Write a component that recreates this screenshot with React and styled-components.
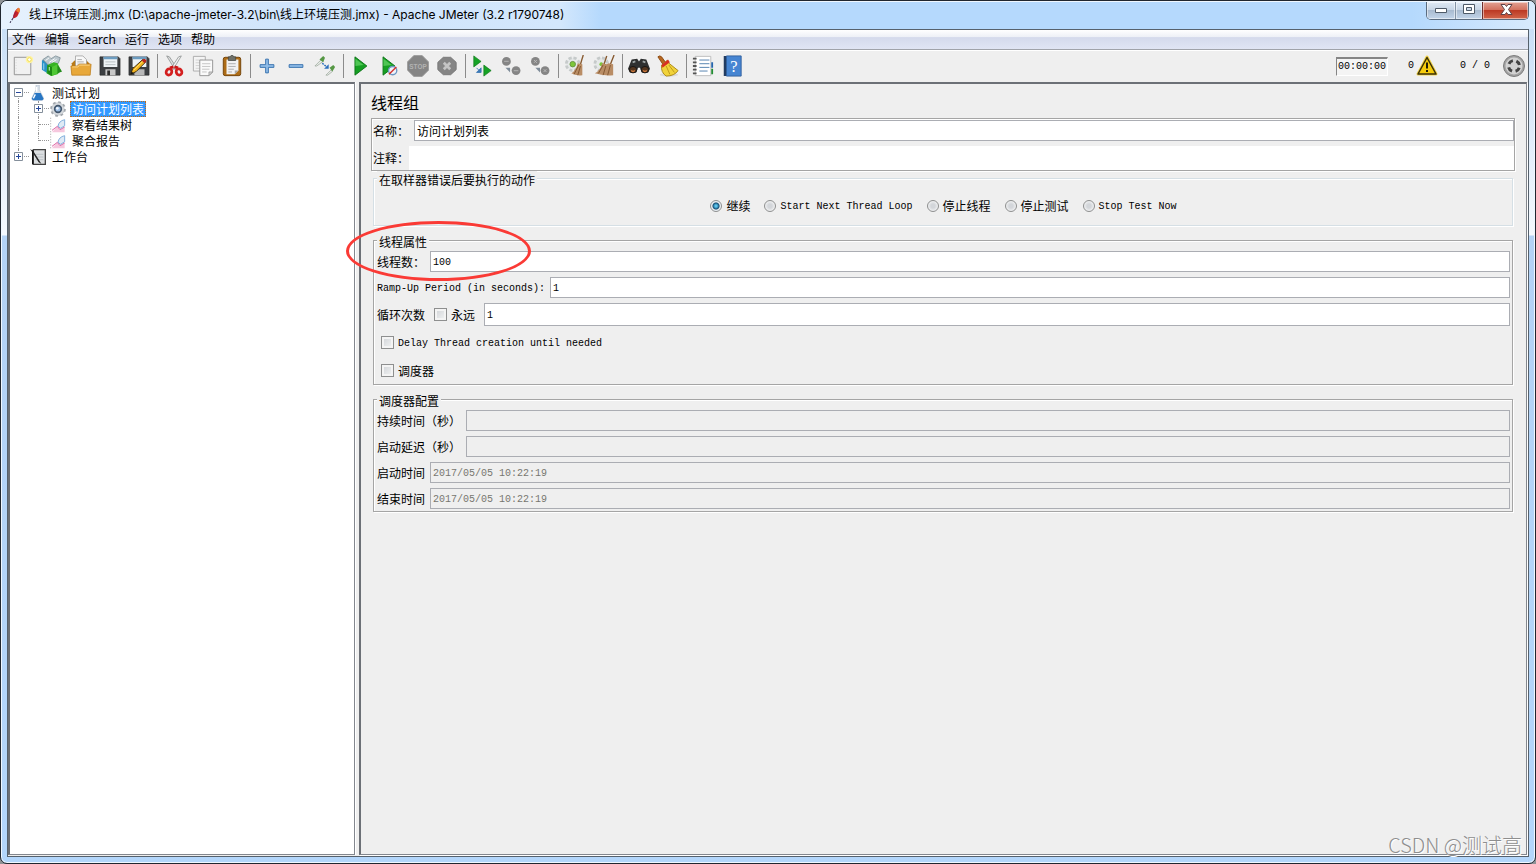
import { useState } from 'react';
import styled, { createGlobalStyle } from 'styled-components';

const arvore = [
    { nome: "测试计划", nivel: 0, icone: "frasco", expansor: "-" },
    { nome: "访问计划列表", nivel: 1, icone: "engrenagem", expansor: "+" },
    { nome: "察看结果树", nivel: 1, icone: "grafico" },
    { nome: "聚合报告", nivel: 1, icone: "grafico", ultimo: true },
    { nome: "工作台", nivel: 0, icone: "caderno", expansor: "+", ultimo: true },
];

const menus = ["文件", "编辑", "Search", "运行", "选项", "帮助"];

const ferramentas = [
    ["novo", "modelos", "abrir", "salvar", "salvarComo"],
    ["cortar", "copiar", "colar"],
    ["mais", "menos", "alternar"],
    ["iniciar", "iniciarSemPausa", "parar", "desligar"],
    ["remotoIniciar", "remotoParar", "remotoDesligar"],
    ["limpar", "limparTudo"],
    ["buscar", "vassoura"],
    ["lista", "ajuda"],
];

const acoes = [
    { texto: "继续" },
    { texto: "Start Next Thread Loop", latino: true },
    { texto: "停止线程" },
    { texto: "停止测试" },
    { texto: "Stop Test Now", latino: true },
];

const desenhos = {
    novo: <>
        <path d="M2.500 2.500h18v19h-18z" fill="#f1f1f1" stroke="#8e8e8e" />
        <path d="M4.500 5v15.500" stroke="#d5d5d5" strokeDasharray="1 2" />
        <circle cx="19" cy="5" r="4" fill="#fff3a0" />
        <circle cx="19" cy="5" r="2" fill="#fff" stroke="#ecd84a" />
    </>,
    modelos: <>
        <path d="M1 6l6-3 4 3v13l-4 1-6-4z" fill="#2a92c8" />
        <path d="M2 5l6-4 3 3 5-3 5 2-2 6-10 3z" fill="#b9c6cc" stroke="#75868e" strokeWidth=".8" />
        <path d="M5 6l4-3M9 8l6-4M12 8l5-3" stroke="#fff" />
        <path d="M3 9v7" stroke="#a8dcf3" />
        <path d="M7 11l7-3 4 1 4 8-4 4-7 2-5-3z" fill="#36b324" />
        <path d="M7 11l5 2v10l-5-3z" fill="#1c8a15" />
        <path d="M12 13l6-3v10l-6 3z" fill="#4fc734" />
        <path d="M9 13v4" stroke="#d9ffd1" />
        <path d="M18 11l5 7-5 2z" fill="#248c1c" />
    </>,
    abrir: <>
        <path d="M2 9l3-3h13l3 3v12h-19z" fill="#b97a17" />
        <path d="M6 1h8l4 4v8h-12z" fill="#f8f8f8" stroke="#999" strokeWidth=".8" />
        <path d="M8 5h5M8 7.500h7M8 10h8" stroke="#aaa" />
        <path d="M1 12h7l2-2h13l-1 12h-20z" fill="#e8a83a" stroke="#bc7c18" strokeWidth=".8" />
        <path d="M2.500 13h6l2-2h11" stroke="#ffd98c" />
    </>,
    salvar: <>
        <path d="M1 2h20l2 2v18h-22z" fill="#3c3f42" stroke="#222" strokeWidth=".6" />
        <path d="M5 2h15v11h-15z" fill="#eef3f6" />
        <path d="M5 2h15v2.500h-15z" fill="#6c9cc0" />
        <path d="M7 7.500h11M7 10.500h11" stroke="#b5bcc0" />
        <path d="M7 15.500h11v6.500h-11z" fill="#c7c7c7" />
        <path d="M9 17h3v5h-3z" fill="#2c2c2c" />
    </>,
    salvarComo: <>
        <path d="M1 2h20l2 2v18h-22z" fill="#3c3f42" stroke="#222" strokeWidth=".6" />
        <path d="M5 2h15v11h-15z" fill="#eef3f6" />
        <path d="M5 2h15v2.500h-15z" fill="#6c9cc0" />
        <path d="M7 15.500h11v6.500h-11z" fill="#b8b8b8" />
        <path d="M3 21l2-6 11-10 3 3-10 10z" fill="#f4b51e" stroke="#34260c" />
        <path d="M6.500 16.500l10-10" stroke="#ffe173" />
        <path d="M15 6l2-2q3 0 3 3l-2 2z" fill="#b8261d" />
        <path d="M3 21l1-3 2 2z" fill="#111" />
    </>,
    cortar: <>
        <path d="M4 1l3 1 8 12-2 2z" fill="#dcdede" stroke="#858989" strokeWidth=".8" />
        <path d="M20 1l-3 1-8 12 2 2z" fill="#f1f1f1" stroke="#858989" strokeWidth=".8" />
        <path d="M11.500 13l-4 1M12.500 13l4 1" stroke="#cc1717" strokeWidth="3" />
        <ellipse cx="6.500" cy="18.500" rx="3" ry="3.500" stroke="#d31f1f" strokeWidth="3" transform="rotate(25 6.500 18.500)" />
        <ellipse cx="17.500" cy="18.500" rx="3" ry="3.500" stroke="#d31f1f" strokeWidth="3" transform="rotate(-25 17.500 18.500)" />
    </>,
    copiar: <>
        <path d="M1.500 1.500h13v16h-13z" fill="#f4f4f4" stroke="#aaa" />
        <path d="M4 5.500h8M4 8.500h8M4 11.500h4M4 14.500h4" stroke="#d0d0d0" />
        <path d="M8.500 5.500h14v13l-4 4h-10z" fill="#fafafa" stroke="#929292" />
        <path d="M11 9.500h9M11 12.500h9M11 15.500h8M11 18.500h5" stroke="#c2c2c2" />
        <path d="M18.500 22.500v-4h4z" fill="#d8d8d8" stroke="#929292" strokeWidth=".8" />
    </>,
    colar: <>
        <rect x="2.500" y="2.500" width="19" height="20" rx="2" fill="#ad6c16" stroke="#704005" />
        <path d="M6 5h13v12l-4 4h-9z" fill="#f2f2f2" />
        <path d="M8 9.500h8M8 12.500h8M8 15.500h6M8 18.500h4" stroke="#aaa" />
        <path d="M19 17l-4 4v-4z" fill="#aaa" />
        <path d="M8 2h2l1-1.500h2l1 1.500h2v4h-8z" fill="#6e7069" stroke="#41433e" strokeWidth=".8" />
    </>,
    mais: <path d="M10.500 4.500h3v6h6v3h-6v6h-3v-6h-6v-3h6z" fill="#8fbce8" stroke="#336fac" />,
    menos: <path d="M4.500 10.500h15v3h-15z" fill="#8fbce8" stroke="#336fac" />,
    alternar: <>
        <path d="M1 12l7-7 2 2-7 5z" fill="#e8ece8" stroke="#9aa69a" strokeWidth=".8" />
        <path d="M6 5l4-4 2 2-2 5z" fill="#559744" />
        <path d="M13 22l6-6 1 2-5 4z" fill="#e8ece8" stroke="#9aa69a" strokeWidth=".8" />
        <path d="M17 14l4-3 2 2-3 5z" fill="#559744" />
        <path d="M9 9l5 4" stroke="#2c6fbd" strokeWidth="1.500" strokeDasharray="2 1" />
        <path d="M16 10v5h-5z" fill="#2c6fbd" />
    </>,
    iniciar: <>
        <path d="M6.500 2l13 10-13 10z" fill="#159f22" stroke="#0d7318" />
        <path d="M7 4l9 7-9 1z" fill="#4fc554" />
    </>,
    iniciarSemPausa: <>
        <path d="M5.500 2l13 10-13 10z" fill="#159f22" stroke="#0d7318" />
        <path d="M6 4l9 7-9 1z" fill="#4fc554" />
        <circle cx="16" cy="17" r="4.500" fill="#eef3fa" stroke="#6d96c2" strokeWidth="1.500" />
        <path d="M12 21l8-8" stroke="#d3312b" strokeWidth="1.500" />
    </>,
    parar: <>
        <path d="M7.500 .5h9l7 7v9l-7 7h-9l-7-7v-9z" fill="#858585" stroke="#9c9c9c" />
        <text x="12" y="15" textAnchor="middle" fontFamily="Liberation Sans" fontWeight="bold" fontSize="7" fill="#b3b3b3">STOP</text>
    </>,
    desligar: <>
        <path d="M8 2.500h8l6 5.500v8l-6 5.500h-8l-6-5.500v-8z" fill="#858585" stroke="#777" />
        <path d="M8.500 8.500l7 7M15.500 8.500l-7 7" stroke="#c4c4c4" strokeWidth="3" />
    </>,
    remotoIniciar: <>
        <path d="M3 1l8 6-8 6z" fill="#16a325" stroke="#0d7318" strokeWidth=".7" />
        <path d="M14 11l8 6-8 6z" fill="#16a325" stroke="#0d7318" strokeWidth=".7" />
        <path d="M6 14l3 3M11 14v5h-5z" stroke="#3e7ab6" fill="#3e7ab6" />
    </>,
    remotoParar: <>
        <circle cx="7" cy="7" r="4.800" fill="#858585" />
        <circle cx="17.500" cy="17" r="4.800" fill="#858585" />
        <path d="M4.500 7h5M15 17h5" stroke="#aaa" strokeWidth="1.500" />
        <path d="M6 14h5v5z" fill="#7f8c99" />
    </>,
    remotoDesligar: <>
        <circle cx="7" cy="7" r="4.800" fill="#858585" />
        <circle cx="17.500" cy="17" r="4.800" fill="#858585" />
        <path d="M5.500 5.500l3 3M8.500 5.500l-3 3M16 15.500l3 3M19 15.500l-3 3" stroke="#bbb" />
        <path d="M7 14h5v5z" fill="#7f8c99" />
    </>,
    limpar: <>
        <circle cx="9.500" cy="10" r="7" fill="#e6e9e9" stroke="#c6caca" strokeWidth="3" strokeDasharray="3.500 2" />
        <circle cx="9.500" cy="10" r="3" fill="#7cc639" stroke="#679342" />
        <path d="M21 0l-3 10" stroke="#875a30" strokeWidth="1.500" />
        <path d="M15 9l5 1v12q-7 1-12-2 5-3 7-11z" fill="#b98d65" />
        <path d="M16 11l-5 10M18 12l-3 10" stroke="#80552f" />
    </>,
    limparTudo: <>
        <circle cx="9" cy="10" r="7" fill="#e6e9e9" stroke="#c6caca" strokeWidth="3" strokeDasharray="3.500 2" />
        <circle cx="9" cy="10" r="2" fill="#7cc639" />
        <path d="M15 1l-3 9M23 0l-4 10" stroke="#875a30" strokeWidth="1.500" />
        <path d="M10 9l5 1 2-1 5 1v12q-11 1-20-2 6-3 8-11z" fill="#b98d65" />
        <path d="M11 11l-5 9M14 12l-3 10M19 11l-3 11" stroke="#80552f" />
    </>,
    buscar: <>
        <path d="M4 5l6-1 2 3 2-3 6 1 4 10-2 4h-7l-2-5h-2l-2 5h-7l-2-4z" fill="#2e3030" />
        <path d="M5 8l3-1M16 7l3 1" stroke="#9da5a5" strokeWidth="2" />
        <ellipse cx="5.500" cy="16" rx="4" ry="3.500" fill="#54361f" stroke="#141414" />
        <ellipse cx="18.500" cy="16" rx="4" ry="3.500" fill="#54361f" stroke="#141414" />
        <path d="M3.500 17q2 2 4 0M16.500 17q2 2 4 0" stroke="#cf793d" strokeWidth="1.500" />
    </>,
    vassoura: <>
        <ellipse cx="13" cy="21.500" rx="10" ry="2" fill="#dadada" />
        <path d="M1 2q2-2 4 0l5 7-3 2z" fill="#b86822" stroke="#89460c" />
        <path d="M5 11l6-5q2 0 2 3l10 8q-4 6-13 6-6-4-5-12z" fill="#f1d33a" stroke="#a98614" />
        <path d="M10 12l4 9M13 11l6 8" stroke="#ba9519" />
        <path d="M5 11l7-6 2 3-8 6z" fill="#d83122" />
    </>,
    lista: <>
        <path d="M3.500 1.500h17v21h-17z" fill="#fff" stroke="#bbb" />
        <path d="M1 4h4M1 8h4M1 12h4M1 16h4M1 20h4" stroke="#555" strokeWidth="2" />
        <path d="M8 5.500h11M8 9.500h11M8 13.500h11M8 17.500h9" stroke="#4c7cab" />
        <path d="M21 8h2v6h-2z" fill="#2464ad" />
        <path d="M21 15h2v6h-2z" fill="#228c32" />
    </>,
    ajuda: <>
        <path d="M3 1h4v22h-4z" fill="#223c61" />
        <path d="M6 1h16v22h-16z" fill="#4685d2" stroke="#2f5f9c" />
        <text x="14" y="18" textAnchor="middle" fontFamily="Liberation Serif" fontSize="18" fill="#fff">?</text>
    </>,
    alerta: <>
        <path d="M12 3l9 17h-18z" fill="#f5cb0b" stroke="#f0d24a" strokeWidth="3" strokeLinejoin="round" />
        <path d="M12 3.500l9 16.500h-18z" fill="#f5cb0b" stroke="#3b3108" strokeWidth="1.500" strokeLinejoin="round" />
        <path d="M12 8.500v6M12 16v2" stroke="#1e1a05" strokeWidth="2" />
    </>,
    indicador: <>
        <circle cx="12" cy="12" r="10.500" fill="#a3a3a3" stroke="#7c7c7c" />
        <circle cx="12" cy="12" r="8.500" fill="#d2d2d2" />
        <circle cx="12" cy="12" r="5.500" stroke="#444" strokeWidth="3" strokeDasharray="5 3.640" strokeDashoffset="-1.800" />
    </>,
    frasco: <>
        <path d="M9 0h5v7l6 12q1 4-2 4h-13q-3 0-2-4l6-12z" fill="#d8e1ea" stroke="#b5c0cc" />
        <path d="M7 12h9l4 8q0 3-2 3h-13q-2 0-2-3z" fill="#2876c4" />
        <path d="M8 14l-3 6M10 3v7" stroke="#fff" strokeWidth="2" />
    </>,
    engrenagem: <>
        <circle cx="12" cy="12" r="10" fill="#c9cdd1" stroke="#a4a9ae" strokeWidth="3.500" strokeDasharray="4 3.850" />
        <circle cx="12" cy="12" r="9" fill="#d5d9dd" />
        <circle cx="12" cy="12" r="5" fill="#9bbde3" stroke="#44576d" strokeWidth="2.500" />
        <circle cx="11" cy="11" r="2" fill="#eef5ff" />
    </>,
    grafico: <>
        <path d="M1 1v22" stroke="#999" strokeDasharray="2 2" />
        <path d="M3 23l8-9 4 5 7-4v8z" fill="#f6c8de" />
        <path d="M3 20l8-6 4 5 7-4" stroke="#df6ba8" strokeWidth="1.500" />
        <path d="M12 14q1-8 10-10v9l-6 4z" stroke="#84b1dd" strokeWidth="1.500" fill="#dfeaf5" />
    </>,
    caderno: <>
        <path d="M5 1h18v22h-18z" fill="#dcdfe1" stroke="#444" strokeWidth="2" />
        <path d="M8 8h12M8 12h12M8 16h12" stroke="#aeb4ba" />
        <path d="M0 0l5 3 12 19-4-2-10-16z" fill="#252525" />
        <path d="M4 2v21" stroke="#111" strokeWidth="2" />
    </>,
    pena: <>
        <path d="M8 15q0-9 7-14 4 2 0 9-2 5-7 5z" fill="#c92328" />
        <path d="M15 1q4 1 1 7l-4-3z" fill="#ec8132" />
        <path d="M8 15q1-4 4-8" stroke="#762059" />
        <path d="M8 15l-4 6" stroke="#39304f" strokeWidth="1.500" strokeDasharray="3 2" />
    </>,
    minimizar: <path d="M6.500 9.500h11v4h-11z" fill="#fff" stroke="#4e5a68" />,
    restaurar: <path d="M6.500 5.500h11v9h-11zM9.500 8.500v3h5v-3z" fill="#fff" fillRule="evenodd" stroke="#4e5a68" />,
    fechar: <path d="M7 5.500h4l1.500 2 1.500-2h4l-3.500 5 3.500 5h-4l-1.500-2-1.500 2h-4l3.500-5z" fill="#fff" stroke="#5f4248" />,
};

function Icone({ nome, tamanho }) {
    return (
        <Desenho viewBox="0 0 24 24" $tamanho={tamanho} fill="none" aria-hidden="true">
            {desenhos[nome]}
        </Desenho>
    )
}

function Campo({ id, rotulo, latino, altura, ...resto }) {
    return (
        <Linha>
            <Rotulo htmlFor={id}><Texto $latino={latino}>{rotulo}</Texto></Rotulo>
            <Entrada id={id} $altura={altura} {...resto} />
        </Linha>
    )
}

function Arvore() {
    const [selecionado, setselecionado] = useState(1);

    return (
        <PainelArvore>
            {arvore.map((item, index) => (
                <No key={item.nome}>
                    {item.nivel === 1 && <Ramo $vertical="inteiro" />}
                    <Ramo $vertical={item.ultimo ? "cima" : index === 0 ? "baixo" : "inteiro"} $horizontal>
                        {item.expansor && <Expansor aria-label={item.nome}>
                            <svg width="9" height="9" fill="none">
                                <path d="M.5 .5h8v8h-8z" fill="#fff" stroke="#848f9b" />
                                <path d={item.expansor === "+" ? "M2 4.500h5M4.500 2v5" : "M2 4.500h5"} stroke="#26489b" />
                            </svg>
                        </Expansor>}
                    </Ramo>
                    <Icone nome={item.icone} tamanho={16} />
                    <NomeNo $ativo={selecionado === index} onClick={() => setselecionado(index)}>{item.nome}</NomeNo>
                </No>
            ))}
        </PainelArvore>
    )
}

function GrupoDeThreads() {
    const [acao, setacao] = useState(0);

    return (
        <PainelDireito>
            <Titulo>线程组</Titulo>
            <Identificacao>
                <Campo id="nome" rotulo="名称：" $chines defaultValue="访问计划列表" />
                <Linha>
                    <Rotulo htmlFor="comentario" $junto>注释：</Rotulo>
                    <Entrada id="comentario" $altura={24} $semBorda />
                </Linha>
            </Identificacao>

            <Grupo $claro>
                <Legenda>在取样器错误后要执行的动作</Legenda>
                <Opcoes>
                    {acoes.map((item, index) => (
                        <Opcao key={item.texto}>
                            <Radio type="radio" name="acao" checked={acao === index} onChange={() => setacao(index)} />
                            <Texto $latino={item.latino}>{item.texto}</Texto>
                        </Opcao>
                    ))}
                </Opcoes>
            </Grupo>

            <Grupo>
                <Legenda>线程属性</Legenda>
                <Campos>
                    <Campo id="threads" rotulo="线程数：" defaultValue="100" />
                    <Campo id="rampa" rotulo="Ramp-Up Period (in seconds):" latino defaultValue="1" />
                    <Linha>
                        <Rotulo htmlFor="ciclos">循环次数</Rotulo>
                        <Sempre><Caixa type="checkbox" />永远</Sempre>
                        <Entrada id="ciclos" $altura={23} defaultValue="1" />
                    </Linha>
                </Campos>
                <Marcadores>
                    <Marcador>
                        <Caixa type="checkbox" />
                        <Texto $latino>Delay Thread creation until needed</Texto>
                    </Marcador>
                    <Marcador><Caixa type="checkbox" />调度器</Marcador>
                </Marcadores>
            </Grupo>

            <Grupo>
                <Legenda>调度器配置</Legenda>
                <Campos>
                    <Campo id="duracao" rotulo="持续时间（秒）" disabled />
                    <Campo id="atraso" rotulo="启动延迟（秒）" disabled />
                    <Campo id="inicio" rotulo="启动时间" disabled defaultValue="2017/05/05 10:22:19" />
                    <Campo id="fim" rotulo="结束时间" disabled defaultValue="2017/05/05 10:22:19" />
                </Campos>
            </Grupo>
        </PainelDireito>
    )
}

export default function App() {
    return (
        <Janela>
            <GlobalStyle />
            <BarraTitulo>
                <Icone nome="pena" tamanho={18} />
                <TextoTitulo>线上环境压测.jmx (D:\apache-jmeter-3.2\bin\线上环境压测.jmx) - Apache JMeter (3.2 r1790748)</TextoTitulo>
                <Controles>
                    <BotaoJanela $largura={28} aria-label="minimizar"><Icone nome="minimizar" tamanho={24} /></BotaoJanela>
                    <BotaoJanela $largura={27} aria-label="restaurar"><Icone nome="restaurar" tamanho={24} /></BotaoJanela>
                    <BotaoJanela $largura={46} $fechar aria-label="fechar"><Icone nome="fechar" tamanho={24} /></BotaoJanela>
                </Controles>
            </BarraTitulo>
            <Cliente>
                <Menu>
                    {menus.map((menu) => <ItemMenu key={menu}>{menu}</ItemMenu>)}
                </Menu>
                <Ferramentas>
                    {ferramentas.map((grupo, index) => (
                        <GrupoFerramentas key={index}>
                            {grupo.map((nome) => (
                                <BotaoFerramenta key={nome} aria-label={nome}><Icone nome={nome} tamanho={22} /></BotaoFerramenta>
                            ))}
                        </GrupoFerramentas>
                    ))}
                    <Estado>
                        <Relogio>00:00:00</Relogio>
                        <Avisos>0<Icone nome="alerta" tamanho={24} /></Avisos>
                        <span>0 / 0</span>
                        <Icone nome="indicador" tamanho={24} />
                    </Estado>
                </Ferramentas>
                <Corpo>
                    <Arvore />
                    <GrupoDeThreads />
                </Corpo>
            </Cliente>
            <Destaque />
            <Marca>CSDN @测试高</Marca>
        </Janela>
    )
}

const GlobalStyle = createGlobalStyle`
    * {
        box-sizing: border-box;
    }

    body {
        margin: 0;
        background-color: #8f9296;
        text-spacing-trim: space-all;
    }

    button, input {
        margin: 0;
        padding: 0;
        font: inherit;
        color: inherit;
    }
`

const fonteTela = `"Noto Sans CJK SC", sans-serif`;
const fonteMono = `"Liberation Mono", "Noto Sans CJK SC", monospace`;

const Janela = styled.div`
    position: relative;
    height: 100vh;
    display: flex;
    flex-direction: column;
    border: 1px solid #20262f;
    border-radius: 7px;
    overflow: hidden;
    background: linear-gradient(#c4dcf6 0px, #f4f8fd 234px, #b3d2f5 235px, #b3d6fb 100%);
    box-shadow: inset 0 0 0 1px #eff7ff;
    font-family: ${fonteTela};
    font-size: 12px;
    line-height: 16px;
    color: #000;
`

const BarraTitulo = styled.header`
    height: 28px;
    flex: none;
    display: flex;
    align-items: center;
    gap: 4px;
    padding-left: 6px;
    border-top: 1px solid #eff7ff;
    background: linear-gradient(90deg, #e6f1fd 0px, #cfe4fb 300px, #d3e7fc 560px, #b5d9fd 600px, #b5d9fd 92%, #d8eafc 100%);
`

const TextoTitulo = styled.h1`
    flex: 1;
    margin: 0 0 2px;
    font-family: Inter, "Noto Sans CJK SC", sans-serif;
    font-size: 12px;
    font-weight: 400;
    white-space: nowrap;
`

const Controles = styled.div`
    align-self: flex-start;
    display: flex;
    margin-right: 6px;
    border: 1px solid #5b6c80;
    border-top: none;
    border-radius: 0 0 5px 5px;
    overflow: hidden;
`

const BotaoJanela = styled.button`
    width: ${props => props.$largura}px;
    height: 17px;
    display: flex;
    align-items: center;
    justify-content: center;
    border: none;
    border-left: 1px solid ${props => props.$fechar ? "#6e2f2d" : "#8393a5"};
    box-shadow: inset 0 0 0 1px rgba(255, 255, 255, 0.5);
    background: ${props => props.$fechar
        ? "linear-gradient(#e3a294 0%, #d3725f 45%, #bc3a24 50%, #d2664b 100%)"
        : "linear-gradient(#e0eaf5 0%, #c8d6e6 45%, #a9bbd0 50%, #c3d5ea 100%)"};

    &:first-child {
        border-left: none;
    }
`

const Cliente = styled.div`
    flex: 1;
    min-height: 0;
    display: flex;
    flex-direction: column;
    margin: 0 6px 6px;
    border: 1px solid #56616c;
    background-color: #efefef;
`

const Menu = styled.nav`
    height: 20px;
    flex: none;
    display: flex;
    gap: 9px;
    padding-left: 4px;
    border-bottom: 1px solid #a0a3aa;
    background: linear-gradient(#fff 0%, #eef1f7 35%, #d4daec 40%, #e0e5f4 100%);
`

const ItemMenu = styled.button`
    border: none;
    background: none;
    font-family: "Noto Sans", "Noto Sans CJK SC", sans-serif;
    line-height: 18px;
`

const Ferramentas = styled.div`
    height: 32px;
    flex: none;
    display: flex;
    align-items: center;
    box-shadow: inset 0 1px 0 #fff;
`

const GrupoFerramentas = styled.div`
    display: flex;
    align-items: center;

    & + & {
        margin-left: 4px;
        padding-left: 1px;
        border-left: 1px solid #8b8b8b;
    }
`

const BotaoFerramenta = styled.button`
    width: 29px;
    height: 24px;
    display: flex;
    align-items: center;
    justify-content: center;
    border: none;
    background: none;
`

const Desenho = styled.svg`
    width: ${props => props.$tamanho}px;
    height: ${props => props.$tamanho}px;
    flex: none;
    display: block;
`

const Estado = styled.div`
    margin-left: auto;
    padding-right: 2px;
    display: flex;
    align-items: center;
    font-family: ${fonteMono};
    font-size: 10px;
    white-space: pre;

    & > span {
        margin: 0 12px 0 21px;
    }
`

const Relogio = styled.div`
    height: 19px;
    padding: 0 1px;
    border: 1px solid #fff;
    border-top: 2px solid #858585;
    border-left-color: #858585;
    background-color: #f4f4f4;
`

const Avisos = styled.div`
    display: flex;
    align-items: center;
    gap: 1px;
    margin-left: 20px;
`

const Corpo = styled.main`
    flex: 1;
    min-height: 0;
    display: flex;
    gap: 4px;
    padding: 0 1px 1px 0;
`

const PainelArvore = styled.ul`
    width: 347px;
    flex: none;
    margin: 0;
    padding: 1px 0 0;
    list-style: none;
    border: 1px solid #83878e;
    border-top: 2px solid #6c7076;
    border-left: 2px solid #6c7076;
    background-color: #fff;
    box-shadow: 1px 0 0 #fff;
`

const No = styled.li`
    height: 16px;
    display: flex;
    align-items: center;
`

const Ramo = styled.span`
    position: relative;
    width: 20px;
    height: 16px;
    flex: none;

    &::before {
        content: "";
        position: absolute;
        left: 8px;
        top: ${props => props.$vertical === "baixo" ? 8 : 0}px;
        height: ${props => props.$vertical === "inteiro" ? 16 : 8}px;
        border-left: 1px dotted #969696;
    }

    &::after {
        content: "";
        display: ${props => props.$horizontal ? "block" : "none"};
        position: absolute;
        left: 9px;
        top: 7px;
        width: 10px;
        border-top: 1px dotted #969696;
    }
`

const Expansor = styled.button`
    position: absolute;
    z-index: 1;
    left: 4px;
    top: 3px;
    display: flex;
    border: none;
    background: none;
`

const NomeNo = styled.button`
    height: 16px;
    margin-left: 4px;
    padding: 0 1px;
    border: 1px ${props => props.$ativo ? "dotted #c8690f" : "solid transparent"};
    background-color: ${props => props.$ativo ? "#3399ff" : "transparent"};
    color: ${props => props.$ativo ? "#fff" : "#000"};
    line-height: 14px;
`

const PainelDireito = styled.section`
    flex: 1;
    min-width: 0;
    padding: 10px 11px 0 10px;
    border: 1px solid #83878e;
    border-top: 2px solid #6c7076;
    border-left: 2px solid #6c7076;
    box-shadow: 1px 1px 0 #fff;
`

const Titulo = styled.h2`
    margin: 0 0 8px;
    font-size: 16px;
    font-weight: 400;
    line-height: 16px;
`

const Identificacao = styled.div`
    display: flex;
    flex-direction: column;
    gap: 5px;
    padding: 1px 0 0 1px;
    border: 1px solid #a5a5a5;
    box-shadow: 1px 1px 0 #fff, inset 1px 1px 0 #fff;
`

const Grupo = styled.fieldset`
    min-width: 0;
    margin: 0 2px 7px;
    padding: 3px 2px 2px 3px;
    border: 1px solid ${props => props.$claro ? "#d5dfe5" : "#a5a5a5"};
    box-shadow: 1px 1px 0 #fff, inset 1px 1px 0 #fff;
`

const Legenda = styled.legend`
    height: 15px;
    padding: 3px 2px 0;
    background-color: #efefef;
    line-height: 12px;
`

const Campos = styled.div`
    display: flex;
    flex-direction: column;
    gap: 5px;
`

const Linha = styled.div`
    display: flex;
    align-items: center;
`

const Rotulo = styled.label`
    flex: none;
    margin-right: ${props => props.$junto ? 0 : 5}px;
    white-space: nowrap;
`

const Texto = styled.span`
    display: block;
    padding-top: ${props => props.$latino ? 2 : 0}px;
    font-family: ${props => props.$latino ? fonteMono : fonteTela};
    font-size: ${props => props.$latino ? 10 : 12}px;
`

const Entrada = styled.input`
    flex: 1;
    min-width: 0;
    height: ${props => props.$altura || 21}px;
    padding: ${props => props.$chines ? 0 : 2}px 2px 0;
    border: ${props => props.$semBorda ? "none" : "1px solid #abadb3"};
    border-radius: 0;
    background-color: #fff;
    font-family: ${fonteMono};
    font-size: ${props => props.$chines ? 12 : 10}px;
    outline: none;

    &:disabled {
        background-color: #efefef;
        color: #77776f;
    }
`

const Opcoes = styled.div`
    display: flex;
    justify-content: center;
    gap: 14px;
    padding: 9px 0;
`

const Opcao = styled.label`
    height: 16px;
    display: flex;
    align-items: center;
    gap: 4px;
`

const Radio = styled.input`
    appearance: none;
    width: 12px;
    height: 12px;
    border: 1px solid #8e8f8f;
    border-radius: 50%;
    background: radial-gradient(circle, #d3d6da 0 2px, #f0f1f2 5px);

    &:checked {
        background: radial-gradient(circle at 5px 5px, #5cc3ea 0 1px, #15567f 3px, #10344f 3px, #e9f0f5 4px);
    }
`

const Caixa = styled.input`
    appearance: none;
    width: 13px;
    height: 13px;
    border: 1px solid #8e8f8f;
    background: linear-gradient(135deg, #cfd2d6, #f4f5f5);
    box-shadow: inset 0 0 0 2px #f4f4f4;

    &:checked {
        background: #3f6f9f;
    }
`

const Sempre = styled.label`
    display: flex;
    align-items: center;
    gap: 4px;
    margin: 0 9px 0 4px;
`

const Marcadores = styled.div`
    display: flex;
    flex-direction: column;
    align-items: flex-start;
    gap: 15px;
    padding: 10px 4px 5px;
`

const Marcador = styled.label`
    height: 13px;
    display: flex;
    align-items: center;
    gap: 4px;
`

const Destaque = styled.div`
    position: absolute;
    left: 345px;
    top: 220px;
    width: 185px;
    height: 60px;
    border: 3px solid #fa3a35;
    border-radius: 50%;
    pointer-events: none;
`

const Marca = styled.div`
    position: absolute;
    right: 13px;
    bottom: 5px;
    color: #8e8e8e;
    font-size: 20px;
    font-weight: 300;
    line-height: 26px;
    text-shadow: 1px 1px 0 #fff;
    pointer-events: none;
`
